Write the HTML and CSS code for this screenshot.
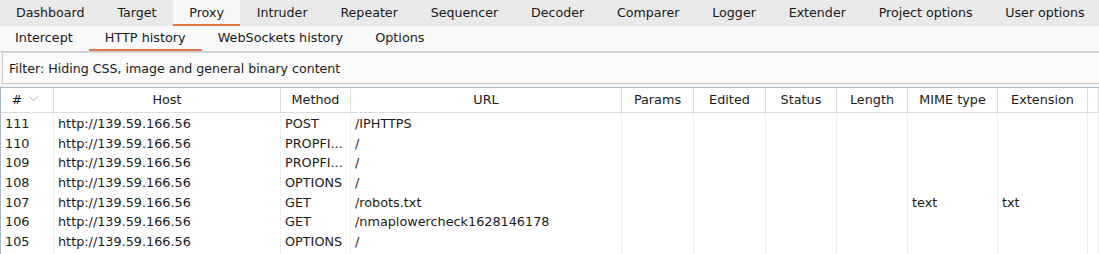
FILE: index.html
```html
<!DOCTYPE html>
<html>
<head>
<meta charset="utf-8">
<link rel="stylesheet" href="styles.css">
</head>
<body>
<div class="app">
  <nav class="tabs">
    <div class="tab">Dashboard</div>
    <div class="tab">Target</div>
    <div class="tab active">Proxy</div>
    <div class="tab">Intruder</div>
    <div class="tab">Repeater</div>
    <div class="tab">Sequencer</div>
    <div class="tab">Decoder</div>
    <div class="tab">Comparer</div>
    <div class="tab">Logger</div>
    <div class="tab">Extender</div>
    <div class="tab">Project options</div>
    <div class="tab">User options</div>
  </nav>
  <nav class="subtabs">
    <div class="subtab">Intercept</div>
    <div class="subtab active">HTTP history</div>
    <div class="subtab">WebSockets history</div>
    <div class="subtab">Options</div>
  </nav>
  <div class="filter-wrap">
    <div class="filter">Filter: Hiding CSS, image and general binary content</div>
  </div>
  <div class="table">
    <div class="row head">
      <div class="c"># <svg class="chev" width="9" height="6" viewBox="0 0 9 6"><path d="M0.5 0.5 L4.5 4.5 L8.5 0.5" fill="none" stroke="#b4b4b4" stroke-width="1"/></svg></div>
      <div class="c">Host</div>
      <div class="c">Method</div>
      <div class="c">URL</div>
      <div class="c">Params</div>
      <div class="c">Edited</div>
      <div class="c">Status</div>
      <div class="c">Length</div>
      <div class="c">MIME type</div>
      <div class="c">Extension</div>
      <div class="c"></div>
    </div>
    <div class="row"><div class="c">111</div><div class="c">http://139.59.166.56</div><div class="c">POST</div><div class="c">/IPHTTPS</div><div class="c"></div><div class="c"></div><div class="c"></div><div class="c"></div><div class="c"></div><div class="c"></div><div class="c"></div></div>
    <div class="row"><div class="c">110</div><div class="c">http://139.59.166.56</div><div class="c">PROPFI...</div><div class="c">/</div><div class="c"></div><div class="c"></div><div class="c"></div><div class="c"></div><div class="c"></div><div class="c"></div><div class="c"></div></div>
    <div class="row"><div class="c">109</div><div class="c">http://139.59.166.56</div><div class="c">PROPFI...</div><div class="c">/</div><div class="c"></div><div class="c"></div><div class="c"></div><div class="c"></div><div class="c"></div><div class="c"></div><div class="c"></div></div>
    <div class="row"><div class="c">108</div><div class="c">http://139.59.166.56</div><div class="c">OPTIONS</div><div class="c">/</div><div class="c"></div><div class="c"></div><div class="c"></div><div class="c"></div><div class="c"></div><div class="c"></div><div class="c"></div></div>
    <div class="row"><div class="c">107</div><div class="c">http://139.59.166.56</div><div class="c">GET</div><div class="c">/robots.txt</div><div class="c"></div><div class="c"></div><div class="c"></div><div class="c"></div><div class="c">text</div><div class="c">txt</div><div class="c"></div></div>
    <div class="row"><div class="c">106</div><div class="c">http://139.59.166.56</div><div class="c">GET</div><div class="c">/nmaplowercheck1628146178</div><div class="c"></div><div class="c"></div><div class="c"></div><div class="c"></div><div class="c"></div><div class="c"></div><div class="c"></div></div>
    <div class="row"><div class="c">105</div><div class="c">http://139.59.166.56</div><div class="c">OPTIONS</div><div class="c">/</div><div class="c"></div><div class="c"></div><div class="c"></div><div class="c"></div><div class="c"></div><div class="c"></div><div class="c"></div></div>
    <div class="row"><div class="c"></div><div class="c"></div><div class="c"></div><div class="c"></div><div class="c"></div><div class="c"></div><div class="c"></div><div class="c"></div><div class="c"></div><div class="c"></div><div class="c"></div></div>
  </div>
</div>
</body>
</html>
```
FILE: styles.css
```css
* { box-sizing: border-box; }
html, body { margin: 0; padding: 0; }
body {
  width: 1099px;
  height: 254px;
  overflow: hidden;
  background: #f4f4f4;
  font-family: "DejaVu Sans", "Liberation Sans", sans-serif;
  color: #1a1a1a;
}
.app { display: flex; flex-direction: column; height: 254px; overflow: hidden; }

.tabs {
  display: flex;
  height: 26px;
  flex: none;
  background: #e9e9e9;
}
.tab {
  padding: 0 16.4px;
  height: 26px;
  line-height: 25px;
  font-size: 12.65px;
  border-bottom: 2px solid transparent;
  white-space: nowrap;
}
.tab:first-child { padding-left: 16px; }
.tab.active {
  background: #f7f7f7;
  border-bottom-color: #e0774b;
}

.subtabs {
  display: flex;
  height: 26px;
  flex: none;
  background: #f9f9f9;
  border-bottom: 1px solid #cfcfcf;
}
.subtab {
  padding: 0 16px;
  height: 25px;
  line-height: 24px;
  font-size: 12.8px;
  border-bottom: 2px solid transparent;
  white-space: nowrap;
}
.subtab:first-child { padding-left: 15px; }
.subtab.active { border-bottom-color: #e0774b; }

.filter-wrap {
  flex: none;
  padding: 0 0 3px 2px;
  background: #f6f6f6;
}
.filter {
  height: 32px;
  line-height: 31px;
  padding-left: 6px;
  font-size: 12.6px;
  background: #fbfbfb;
  border: 1px solid #c9c9c9;
  border-top-color: #d6d6d6;
  border-right: none;
}

.table {
  flex: 1;
  min-height: 0;
  overflow: hidden;
  background: #fff;
  border-top: 1px solid #a8b5c2;
  border-left: 1px solid #a8b5c2;
}
.row {
  display: grid;
  grid-template-columns: 53px 227px 70px 271px 72px 72px 71px 71px 90px 90px 1fr;
  height: 19.67px;
  font-size: 12.8px;
}
.row .c {
  padding-left: 4px;
  border-right: 1px solid #efefef;
  white-space: nowrap;
  overflow: hidden;
  line-height: 19.67px;
  padding-top: 1px;
}
.row.head {
  height: 25px;
  border-bottom: 1px solid #dcdcdc;
}
.row.head .c {
  text-align: center;
  padding-left: 0;
  line-height: 24px;
  padding-top: 0;
  border-right-color: #dadada;
}
.row.head .c:first-child { padding-right: 4px; }
.chev { margin-left: 3px; vertical-align: 2px; }
```
